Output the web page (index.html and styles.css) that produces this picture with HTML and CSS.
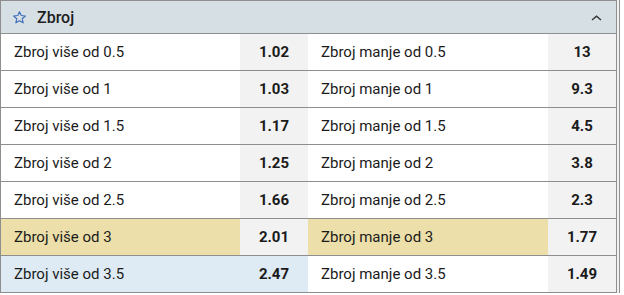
FILE: index.html
```html
<!DOCTYPE html>
<html lang="hr">
<head>
<meta charset="utf-8">
<title>Zbroj</title>
<link rel="stylesheet" href="styles.css">
</head>
<body>
<div class="wrap">
  <section class="market">
    <header class="head">
      <svg class="star" width="15" height="15" viewBox="0 0 24 24" aria-hidden="true">
        <path d="M12 2.8l2.75 6.1 6.65.65-5 4.45 1.45 6.55L12 17.2l-5.85 3.35 1.45-6.55-5-4.45 6.65-.65z" fill="none" stroke="#3d6db8" stroke-width="1.8" stroke-linejoin="round"/>
      </svg>
      <span class="title">Zbroj</span>
      <svg class="chev" width="11" height="6" viewBox="0 0 11 6" aria-hidden="true">
        <polyline points="1,5 5.5,1.2 10,5" fill="none" stroke="#333" stroke-width="1.3"/>
      </svg>
    </header>
    <div class="rows">
      <div class="row">
        <div class="label">Zbroj više od 0.5</div><div class="odd">1.02</div>
        <div class="label">Zbroj manje od 0.5</div><div class="odd">13</div>
      </div>
      <div class="row">
        <div class="label">Zbroj više od 1</div><div class="odd">1.03</div>
        <div class="label">Zbroj manje od 1</div><div class="odd">9.3</div>
      </div>
      <div class="row">
        <div class="label">Zbroj više od 1.5</div><div class="odd">1.17</div>
        <div class="label">Zbroj manje od 1.5</div><div class="odd">4.5</div>
      </div>
      <div class="row">
        <div class="label">Zbroj više od 2</div><div class="odd">1.25</div>
        <div class="label">Zbroj manje od 2</div><div class="odd">3.8</div>
      </div>
      <div class="row">
        <div class="label">Zbroj više od 2.5</div><div class="odd">1.66</div>
        <div class="label">Zbroj manje od 2.5</div><div class="odd">2.3</div>
      </div>
      <div class="row">
        <div class="label yellow">Zbroj više od 3</div><div class="odd">2.01</div>
        <div class="label yellow">Zbroj manje od 3</div><div class="odd">1.77</div>
      </div>
      <div class="row">
        <div class="label blue">Zbroj više od 3.5</div><div class="odd blue">2.47</div>
        <div class="label">Zbroj manje od 3.5</div><div class="odd">1.49</div>
      </div>
    </div>
  </section>
  <div class="gap"></div>
  <div class="rail"></div>
</div>
</body>
</html>
```
FILE: styles.css
```css
html, body {
  margin: 0;
  padding: 0;
  background: #ffffff;
}
body {
  font-family: Roboto, "Liberation Sans", Arial, sans-serif;
  color: #1b1b1b;
  width: 624px;
  height: 295px;
  overflow: hidden;
}
.wrap {
  display: flex;
  align-items: stretch;
}
.market {
  width: 615px;
  border-left: 1px solid #8e8e8e;
  border-right: 1px solid #8e8e8e;
  border-top: 1px solid #8e8e8e;
  flex: none;
}
.gap {
  width: 2px;
  background: #f0f0f0;
  flex: none;
}
.rail {
  width: 1px;
  background: #8e8e8e;
  flex: none;
}
.head {
  height: 32px;
  background: #d6dfe4;
  border-bottom: 1px solid #8e8e8e;
  display: flex;
  align-items: center;
  padding: 0 0 0 11px;
}
.star {
  flex: none;
  margin-top: 1px;
}
.title {
  margin-left: 10px;
  font-size: 16px;
  font-weight: 500;
  color: #1e1e1e;
}
.chev {
  margin-left: auto;
  margin-right: 14px;
  margin-top: 2px;
}
.row {
  display: grid;
  grid-template-columns: 239px 68px 240px 68px;
  height: 36px;
  border-bottom: 1px solid #8e8e8e;
}
.label {
  display: flex;
  align-items: center;
  padding-left: 13px;
  font-size: 15px;
  background: #ffffff;
}
.odd {
  display: flex;
  align-items: center;
  justify-content: center;
  font-size: 15px;
  font-weight: 700;
  background: #f2f2f2;
}
.yellow {
  background: #ecdfa9;
}
.blue {
  background: #deeaf4;
}
```
